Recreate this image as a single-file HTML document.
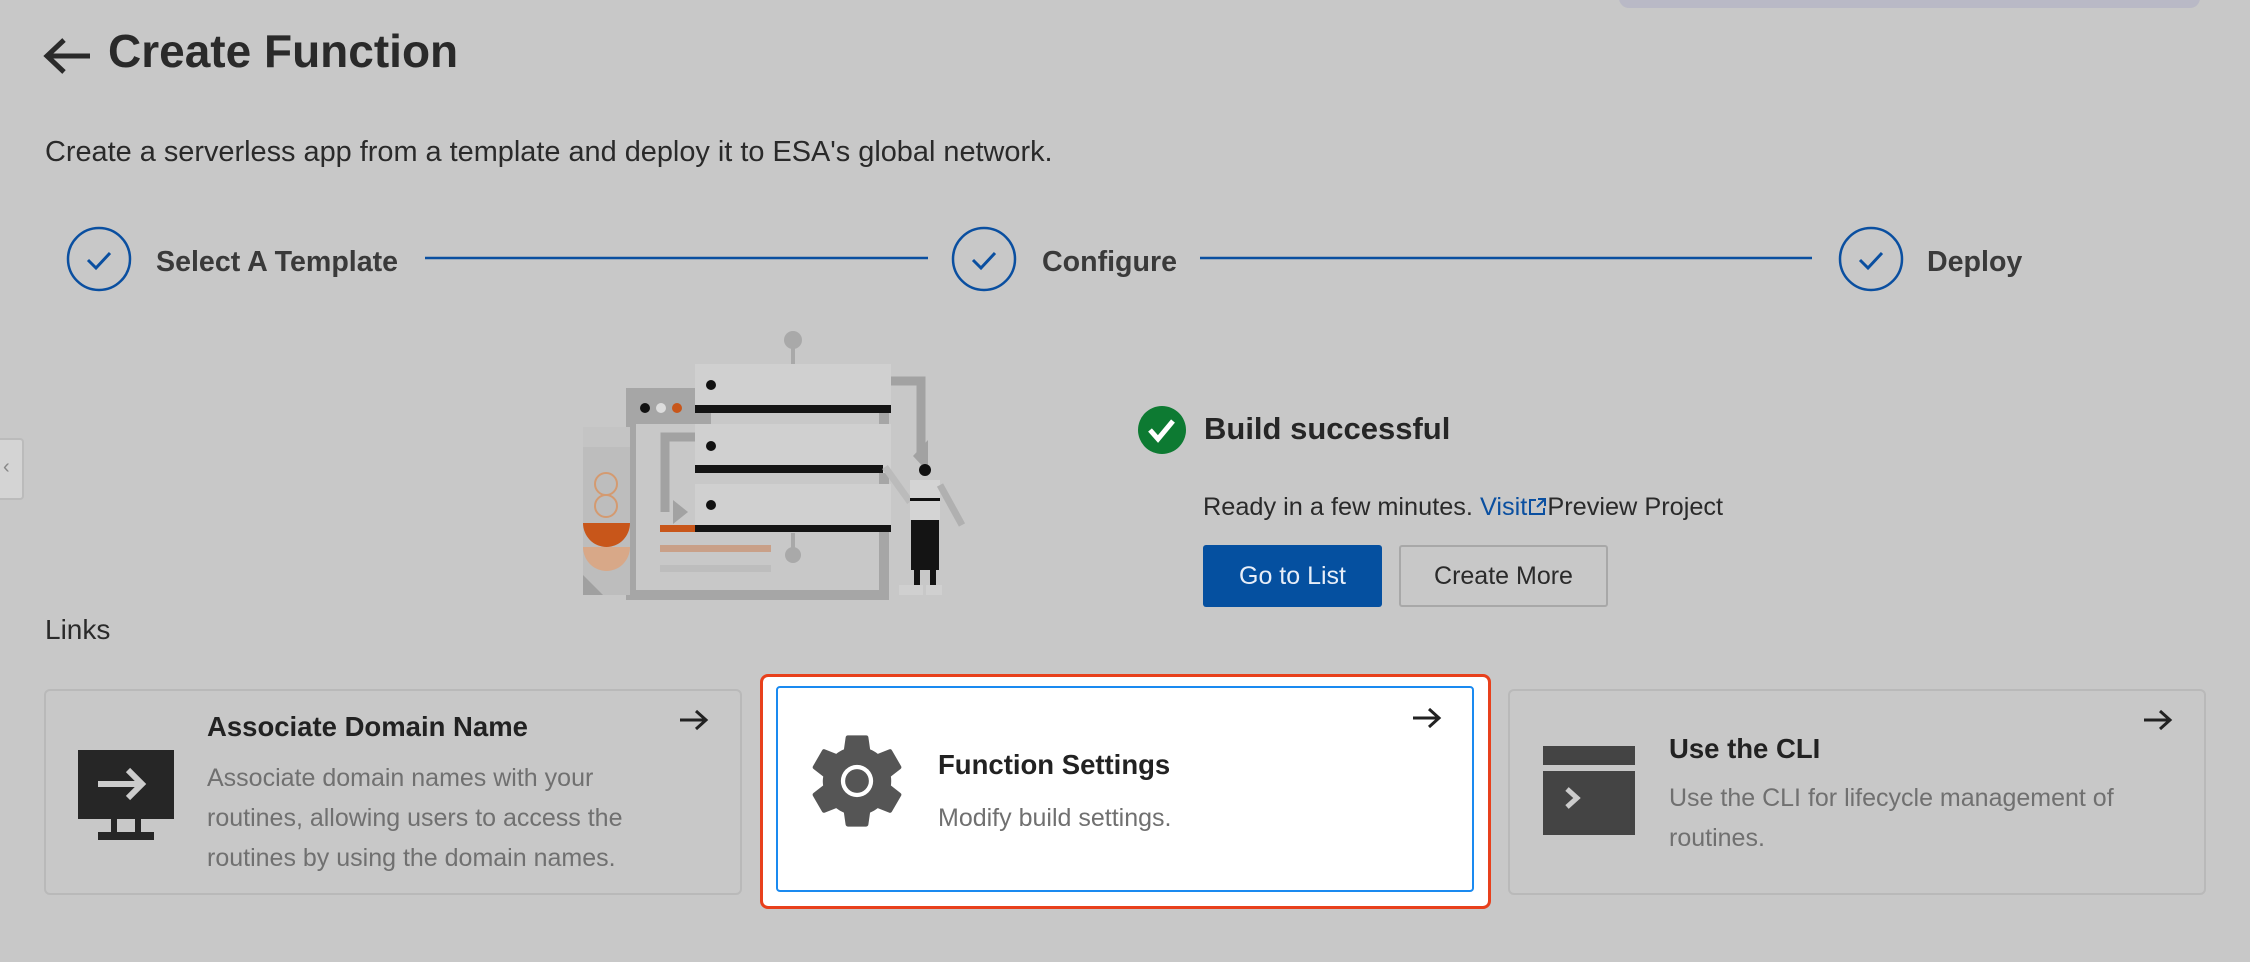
<!DOCTYPE html>
<html><head><meta charset="utf-8"><style>
*{margin:0;padding:0;box-sizing:border-box}
body{width:2250px;height:962px;background:#c8c8c8;font-family:"Liberation Sans",sans-serif;color:#2a2a2a;position:relative;overflow:hidden}
.a{position:absolute;white-space:nowrap}
.step{font-size:28.6px;font-weight:bold;color:#3a3a3a}
.card{position:absolute;border:2px solid #b9b9b9;border-radius:6px;background:#c8c8c8}
.ct{font-size:27.5px;font-weight:bold;color:#222}
.cd{font-size:25px;color:#707070;line-height:40px;white-space:normal}
.arr{position:absolute}
</style></head><body>
<div class="a" style="left:1619px;top:-12px;width:581px;height:20px;background:#b9b9c6;border-radius:10px"></div>
<div class="a" style="left:-4px;top:438px;width:28px;height:62px;background:#d4d4d4;border:2px solid #bbb;border-radius:4px"></div>
<div class="a" style="left:3px;top:456px;font-size:20px;color:#888">‹</div>

<svg class="a" style="left:42px;top:36px" width="52" height="40" viewBox="0 0 52 40"><path d="M48 20H6M22 4L5 20l17 16" fill="none" stroke="#2a2a2a" stroke-width="5"/></svg>
<div class="a" style="left:108px;top:24px;font-size:46px;font-weight:bold;color:#2a2a2a">Create Function</div>
<div class="a" style="left:45px;top:136px;font-size:28.9px;color:#2a2a2a">Create a serverless app from a template and deploy it to ESA's global network.</div>

<svg class="a" style="left:0;top:220px" width="2250" height="80">
<g fill="none" stroke="#0a4fa0" stroke-width="2.5">
<circle cx="99" cy="39" r="31"/><circle cx="984" cy="39" r="31"/><circle cx="1871" cy="39" r="31"/>
<path d="M425 38H928M1200 38H1812"/>
<path d="M88 40l8 8 14-15M973 40l8 8 14-15M1860 40l8 8 14-15" stroke-width="3"/>
</g></svg>
<div class="a step" style="left:156px;top:246px">Select A Template</div>
<div class="a step" style="left:1042px;top:246px">Configure</div>
<div class="a step" style="left:1927px;top:246px">Deploy</div>

<svg class="a" style="left:0;top:0" width="1000" height="620">
<circle cx="793" cy="340" r="9" fill="#a9a9a9"/><rect x="791" y="345" width="4" height="20" fill="#a9a9a9"/>
<rect x="631" y="393" width="253" height="202" fill="none" stroke="#a6a6a6" stroke-width="10"/>
<rect x="631" y="393" width="80" height="31" fill="#a6a6a6"/>
<circle cx="645" cy="408" r="5" fill="#111"/><circle cx="661" cy="408" r="5" fill="#ddd"/><circle cx="677" cy="408" r="5" fill="#c8561a"/>
<rect x="583" y="427" width="47" height="168" fill="#bdbdbd"/>
<rect x="583" y="427" width="47" height="20" fill="#c4c4c4"/>
<circle cx="606" cy="484" r="11" fill="none" stroke="#d49a70" stroke-width="2"/><circle cx="606" cy="506" r="11" fill="none" stroke="#d49a70" stroke-width="2"/>
<path d="M583 523h47a23.5 24 0 0 1-47 0z" fill="#c8561a"/>
<path d="M583 547h47a23.5 24 0 0 1-47 0z" fill="#d8a888"/>
<path d="M583 575l20 20h-20z" fill="#a0a0a0"/>
<path d="M891 381h30v77" fill="none" stroke="#a2a2a2" stroke-width="9"/><path d="M905 449l16 15 16-15z" fill="#a2a2a2" transform="rotate(90 921 456)"/>
<path d="M695 437h-30v75" fill="none" stroke="#a2a2a2" stroke-width="9"/><path d="M673 500l15 12-15 12z" fill="#a2a2a2"/>
<rect x="695" y="364" width="196" height="49" fill="#d0d0d0"/><rect x="695" y="405" width="196" height="8" fill="#141414"/><circle cx="711" cy="385" r="5" fill="#111"/>
<rect x="695" y="424" width="196" height="49" fill="#d0d0d0"/><rect x="695" y="465" width="188" height="8" fill="#141414"/><circle cx="711" cy="446" r="5" fill="#111"/>
<rect x="695" y="484" width="196" height="48" fill="#d0d0d0"/><rect x="695" y="525" width="196" height="7" fill="#141414"/><rect x="660" y="525" width="35" height="7" fill="#c8561a"/><circle cx="711" cy="505" r="5" fill="#111"/>
<rect x="660" y="545" width="111" height="7" fill="#c9a088"/><rect x="660" y="565" width="111" height="7" fill="#bdbdbd"/>
<circle cx="793" cy="555" r="8" fill="#a9a9a9"/><rect x="791" y="533" width="4" height="16" fill="#a9a9a9"/>
<path d="M885 467l25 35" stroke="#bbb" stroke-width="7"/>
<circle cx="925" cy="470" r="6" fill="#111"/>
<rect x="910" y="480" width="30" height="40" fill="#d4d4d4"/><rect x="910" y="498" width="30" height="3" fill="#111"/>
<path d="M940 485l22 40" stroke="#b0b0b0" stroke-width="7"/>
<rect x="911" y="520" width="28" height="50" fill="#141414"/>
<rect x="914" y="570" width="6" height="15" fill="#141414"/><rect x="930" y="570" width="6" height="15" fill="#141414"/>
<rect x="899" y="585" width="24" height="10" fill="#d0d0d0"/><rect x="926" y="585" width="16" height="10" fill="#d0d0d0"/>
</svg>

<svg class="a" style="left:1138px;top:406px" width="48" height="48"><circle cx="24" cy="24" r="24" fill="#0d7a32"/><path d="M12 24l8 9 15-18" fill="none" stroke="#fff" stroke-width="5"/></svg>
<div class="a" style="left:1204px;top:411px;font-size:31px;font-weight:bold;color:#262626">Build successful</div>
<div class="a" style="left:1203px;top:493px;font-size:25.3px;color:#2a2a2a">Ready in a few minutes. <span style="color:#0a4fa0">Visit</span><svg width="20" height="20" viewBox="0 0 20 20" style="vertical-align:-2px"><path d="M9 3H3v14h14v-6M11 2h7v7M18 2l-8 8" fill="none" stroke="#0a4fa0" stroke-width="2"/></svg>Preview Project</div>
<div class="a" style="left:1203px;top:545px;width:179px;height:62px;background:#0550a0;border-radius:3px;color:#e8eef8;font-size:25px;line-height:62px;text-align:center">Go to List</div>
<div class="a" style="left:1399px;top:545px;width:209px;height:62px;border:2px solid #a8a8a8;border-radius:3px;color:#2a2a2a;font-size:25px;line-height:58px;text-align:center">Create More</div>

<div class="a" style="left:45px;top:614px;font-size:28px;color:#2a2a2a">Links</div>

<div class="card" style="left:44px;top:689px;width:698px;height:206px"></div>
<svg class="a" style="left:78px;top:750px" width="96" height="90"><rect x="0" y="0" width="96" height="69" fill="#262626"/><path d="M20 34h44M50 20l14 14-14 14" fill="none" stroke="#ccc" stroke-width="6"/><rect x="33" y="69" width="6" height="14" fill="#262626"/><rect x="57" y="69" width="6" height="14" fill="#262626"/><rect x="20" y="82" width="56" height="8" fill="#262626"/></svg>
<div class="a ct" style="left:207px;top:711px">Associate Domain Name</div>
<div class="a cd" style="left:207px;top:758px;width:450px">Associate domain names with your routines, allowing users to access the routines by using the domain names.</div>
<svg class="arr" style="left:678px;top:708px" width="32" height="24"><path d="M2 12h26M18 3l10 9-10 9" fill="none" stroke="#222" stroke-width="3"/></svg>

<div class="a" style="left:760px;top:674px;width:731px;height:235px;border:3px solid #e8401c;border-radius:8px;background:#fff"></div>
<div class="a" style="left:776px;top:686px;width:698px;height:206px;border:2px solid #1a8af0;border-radius:4px;background:#fff"></div>
<svg class="a" style="left:800px;top:724px" width="114" height="114" viewBox="0 0 24 24"><path fill="#555" d="M19.14 12.94c.04-.3.06-.61.06-.94s-.02-.64-.07-.94l2.03-1.58a.49.49 0 0 0 .12-.61l-1.92-3.32a.49.49 0 0 0-.59-.22l-2.39.96c-.5-.38-1.030-.7-1.62-.94l-.36-2.54a.48.48 0 0 0-.48-.41h-3.84c-.24 0-.43.17-.47.41l-.36 2.54c-.59.24-1.13.57-1.62.94l-2.39-.96a.48.48 0 0 0-.59.22L2.74 8.87a.47.47 0 0 0 .12.61l2.03 1.58c-.05.3-.09.63-.09.94s.02.64.07.94l-2.03 1.58a.49.49 0 0 0-.12.61l1.92 3.32c.12.22.37.29.59.22l2.39-.96c.5.38 1.03.7 1.62.94l.36 2.54c.05.24.24.41.48.41h3.84c.24 0 .44-.17.47-.41l.36-2.54c.59-.24 1.13-.56 1.62-.94l2.39.96c.22.08.47 0 .59-.22l1.92-3.32a.46.46 0 0 0-.12-.61l-2.01-1.58z"/><circle cx="12" cy="12" r="3.4" fill="#fff"/><circle cx="12" cy="12" r="2.5" fill="#555"/></svg>
<div class="a ct" style="left:938px;top:749px">Function Settings</div>
<div class="a cd" style="left:938px;top:798px">Modify build settings.</div>
<svg class="arr" style="left:1411px;top:706px" width="32" height="24"><path d="M2 12h26M18 3l10 9-10 9" fill="none" stroke="#222" stroke-width="3"/></svg>

<div class="card" style="left:1508px;top:689px;width:698px;height:206px"></div>
<svg class="a" style="left:1543px;top:746px" width="92" height="90"><rect x="0" y="0" width="92" height="19" fill="#444"/><rect x="0" y="25" width="92" height="64" fill="#444"/><path d="M24 43l10 9-10 9" fill="none" stroke="#ccc" stroke-width="5"/></svg>
<div class="a ct" style="left:1669px;top:733px">Use the CLI</div>
<div class="a cd" style="left:1669px;top:778px;width:480px">Use the CLI for lifecycle management of routines.</div>
<svg class="arr" style="left:2142px;top:708px" width="32" height="24"><path d="M2 12h26M18 3l10 9-10 9" fill="none" stroke="#222" stroke-width="3"/></svg>
</body></html>
